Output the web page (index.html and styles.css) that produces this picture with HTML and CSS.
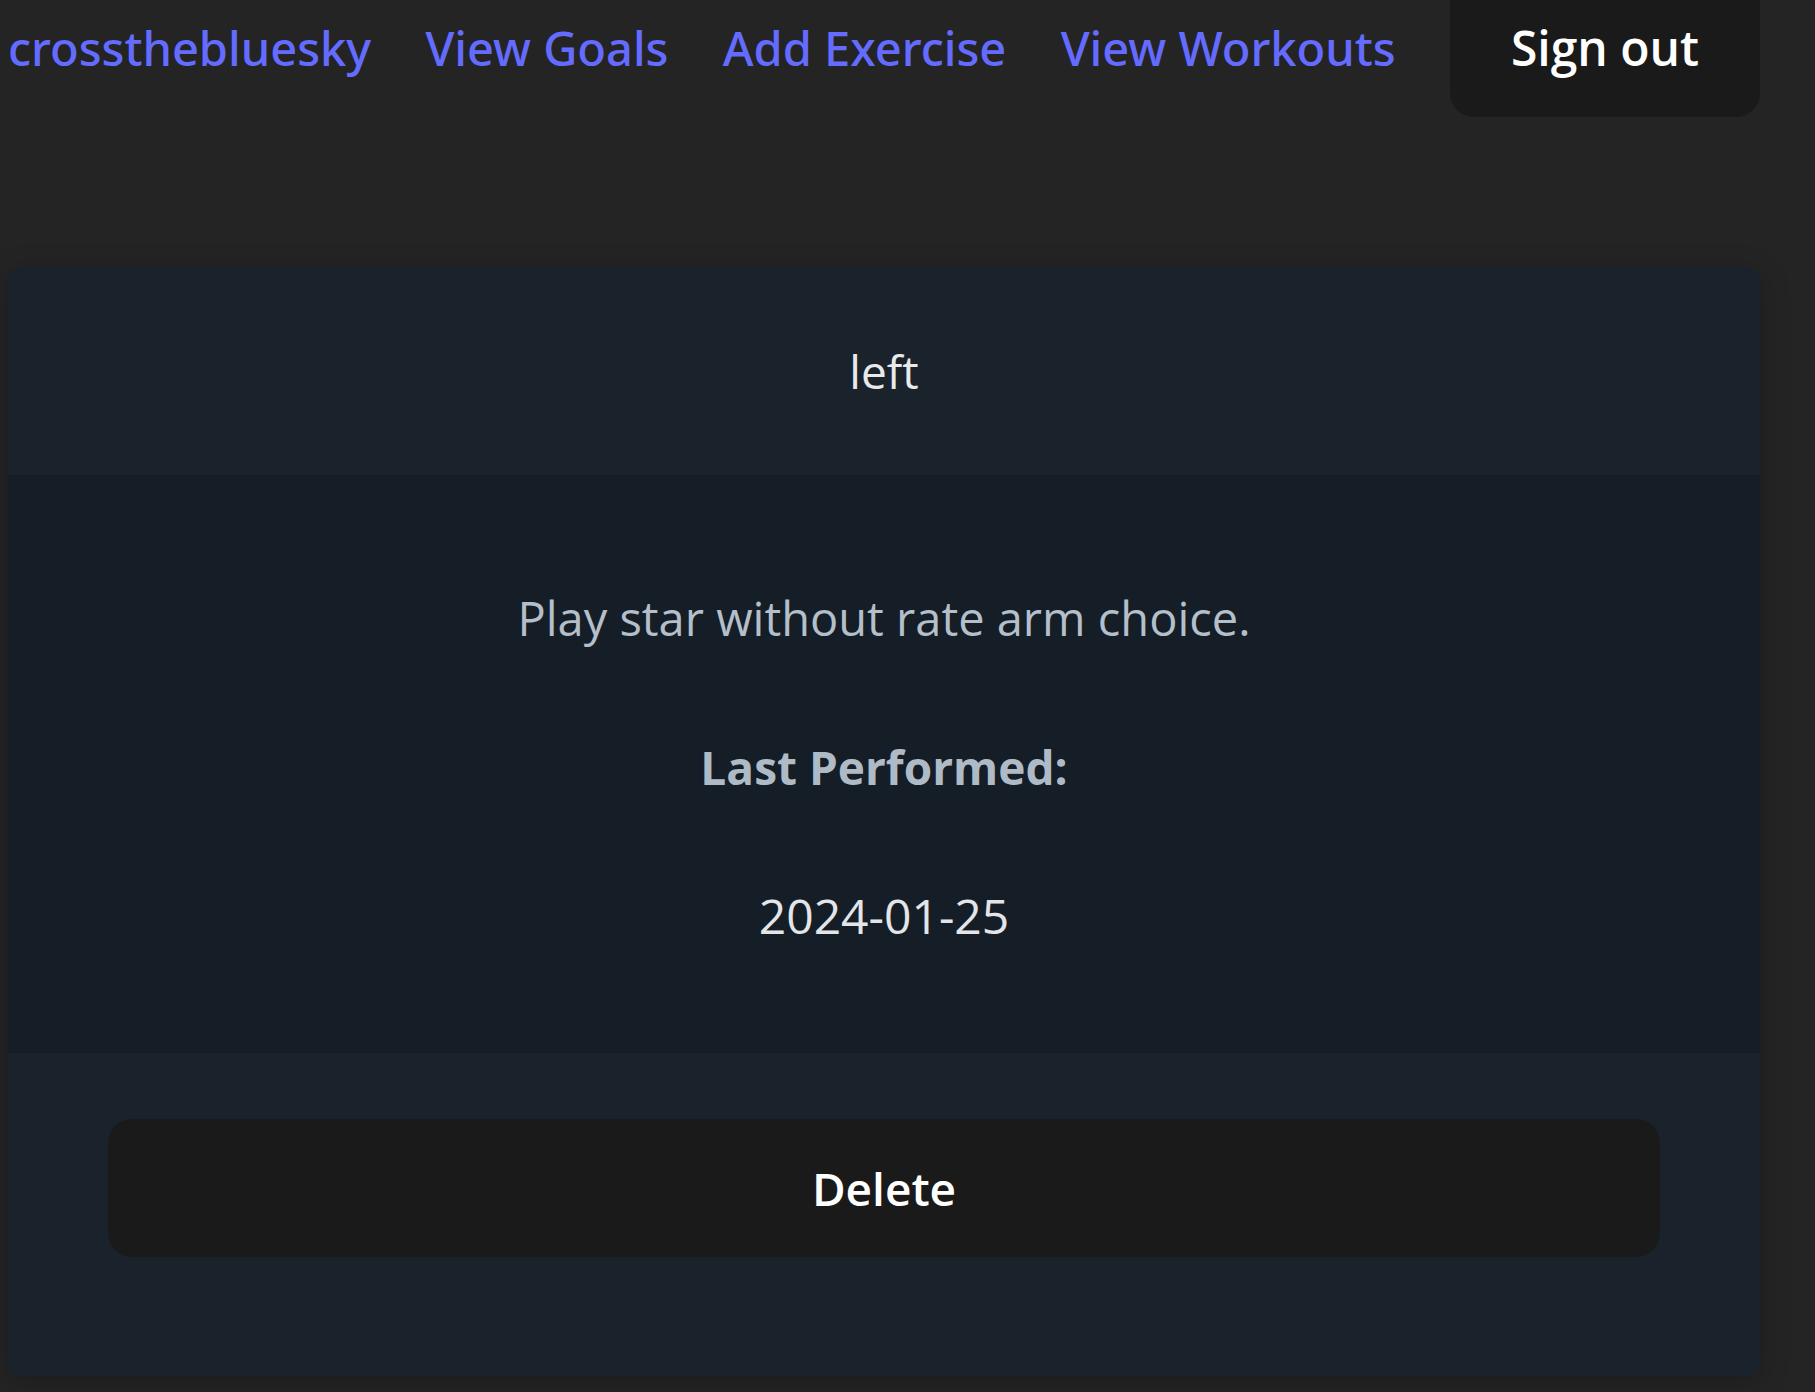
FILE: index.html
```html
<!DOCTYPE html>
<html lang="en">
<head>
<meta charset="utf-8">
<title>Exercise</title>
<link rel="stylesheet" href="styles.css">
</head>
<body>
<div class="page">
  <nav class="topbar">
    <a class="nav-link" href="#">crossthebluesky</a>
    <a class="nav-link" href="#">View Goals</a>
    <a class="nav-link" href="#">Add Exercise</a>
    <a class="nav-link" href="#">View Workouts</a>
    <button class="btn">Sign out</button>
  </nav>
  <section class="card">
    <header class="card-header">left</header>
    <div class="card-body">
      <p class="desc">Play star without rate arm choice.</p>
      <p class="label">Last Performed:</p>
      <p class="date">2024-01-25</p>
    </div>
    <footer class="card-footer">
      <button class="btn btn-block">Delete</button>
    </footer>
  </section>
</div>
</body>
</html>
```

FILE: styles.css
```css
html, body {
  margin: 0;
  background: #242424;
}
body {
  font-family: "Open Sans", "Noto Sans", sans-serif;
  font-size: 46px;
  line-height: 72px;
  color: rgba(255, 255, 255, 0.87);
  overflow: hidden;
  height: 1392px;
}
.page {
  padding: 0 55px 0 8px;
  margin-top: -21px;
}
.topbar {
  display: flex;
  justify-content: space-between;
  align-items: center;
}
.nav-link {
  color: #646cff;
  text-decoration: none;
  font-family: "Noto Sans", "Open Sans", sans-serif;
  font-weight: 500;
  font-size: 47px;
}
.btn {
  background: #1a1a1a;
  color: #ffffff;
  border: 3px solid transparent;
  border-radius: 24px;
  padding: 30px 58px;
  font-family: inherit;
  font-size: 48px;
  line-height: 72px;
  font-weight: 600;
  cursor: pointer;
}
.card {
  margin-top: 150px;
  border-radius: 12px;
  overflow: hidden;
  text-align: center;
  box-shadow: 0 6px 30px rgba(0, 0, 0, 0.22);
}
.card-header {
  background: #1a232c;
  padding: 68px 0;
  color: #e8e9eb;
}
.card-body {
  background: #151e27;
  padding: 107px 0 101px;
  display: flex;
  flex-direction: column;
  gap: 77px;
}
.card-body p {
  margin: 0;
}
.desc {
  color: #b4bfca;
  font-size: 47px;
}
.label {
  color: #aebbc6;
  font-weight: 700;
}
.date {
  color: #e3e5e8;
  font-size: 48px;
}
.card-footer {
  background: #1a232c;
  padding: 66px 100px 119px;
}
.btn-block {
  display: block;
  width: 100%;
  font-size: 46px;
}
```
